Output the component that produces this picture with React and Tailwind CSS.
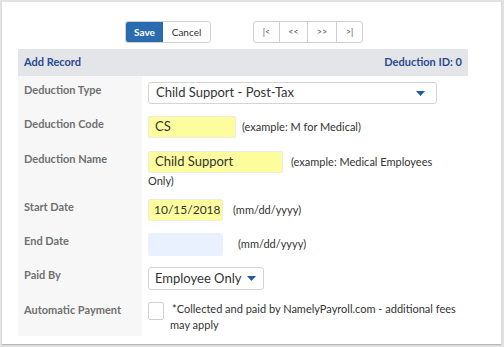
import React from "react";

function Caret() {
  return (
    <svg width="9" height="5" viewBox="0 0 9 5" className="block">
      <path d="M0 0 L9 0 L4.5 5 Z" fill="#1f5ca6" />
    </svg>
  );
}

function Row({ label, h, children }) {
  return (
    <div className="flex" style={{ height: h }}>
      <div className="w-[124px] shrink-0 bg-[#f7f7f7] pl-[6px] pt-[7px] text-[11px] font-bold leading-[14px] text-[#707070]">
        {label}
      </div>
      <div className="flex-1 pl-[6px] pt-[6px]">{children}</div>
    </div>
  );
}

export default function App() {
  return (
    <div
      className="w-[504px] h-[347px] bg-[#e2e2e2] pt-[2px] pl-[2px] pr-[3px]"
      style={{ fontFamily: "Lato, 'Open Sans', Arial, sans-serif" }}
    >
      <div className="h-[342px] bg-white shadow-[0_1px_1px_#b8b8b8] pt-[19px]">
        {/* toolbar */}
        <div className="flex h-[22px] items-stretch">
          <div className="ml-[123px] flex rounded-[3px] border border-[#cfcfcf] overflow-hidden">
            <div className="w-[37px] bg-[#2b6cb0] text-white text-[10px] font-bold flex items-center justify-center">
              Save
            </div>
            <div className="w-[47px] bg-white text-[#333] text-[10px] flex items-center justify-center">
              Cancel
            </div>
          </div>
          <div className="ml-[42px] flex rounded-[3px] border border-[#cfcfcf] overflow-hidden text-[9px] text-[#555]">
            <div className="w-[26px] flex items-center justify-center border-r border-[#cfcfcf]">|&lt;</div>
            <div className="w-[28px] flex items-center justify-center border-r border-[#cfcfcf]">&lt;&lt;</div>
            <div className="w-[29px] flex items-center justify-center border-r border-[#cfcfcf]">&gt;&gt;</div>
            <div className="w-[25px] flex items-center justify-center">&gt;|</div>
          </div>
        </div>

        <div className="ml-[16px] mt-[6px] w-[450px]">
          {/* header */}
          <div className="h-[27px] bg-[#e4e5e9] flex items-center justify-between px-[6px] text-[11px] font-bold text-[#2b4a8f]">
            <span>Add Record</span>
            <span>Deduction ID: 0</span>
          </div>

          <Row label="Deduction Type" h={34}>
            <div className="w-[289px] h-[22px] border border-[#d4d4d4] rounded-[3px] flex items-center justify-between pl-[7px] pr-[11px] text-[13px] text-[#333]">
              <span>Child Support - Post-Tax</span>
              <Caret />
            </div>
          </Row>

          <Row label="Deduction Code" h={35}>
            <div className="flex items-center">
              <div className="w-[88px] h-[22px] bg-[#fdfd9e] border border-[#ecece0] rounded-[2px] flex items-center pl-[6px] text-[13px] text-[#333]">
                CS
              </div>
              <span className="ml-[6px] text-[11px] text-[#333]">(example: M for Medical)</span>
            </div>
          </Row>

          <Row label="Deduction Name" h={48}>
            <div className="flex items-center">
              <div className="w-[135px] h-[22px] bg-[#fdfd9e] border border-[#ecece0] rounded-[2px] flex items-center pl-[6px] text-[13px] text-[#333]">
                Child Support
              </div>
              <span className="ml-[8px] text-[11px] text-[#333]">(example: Medical Employees</span>
            </div>
            <div className="text-[11px] leading-[14px] mt-[1px] text-[#333]">Only)</div>
          </Row>

          <Row label="Start Date" h={34}>
            <div className="flex items-center">
              <div className="w-[75px] h-[22px] bg-[#fdfd9e] border border-[#ecece0] rounded-[2px] flex items-center pl-[5px] text-[12px] text-[#333]">
                10/15/2018
              </div>
              <span className="ml-[10px] text-[11px] text-[#333]">(mm/dd/yyyy)</span>
            </div>
          </Row>

          <Row label="End Date" h={34}>
            <div className="flex items-center">
              <div className="w-[75px] h-[23px] bg-[#e8f1fd] rounded-[2px]"></div>
              <span className="ml-[15px] text-[11px] text-[#333]">(mm/dd/yyyy)</span>
            </div>
          </Row>

          <Row label="Paid By" h={35}>
            <div className="w-[116px] h-[23px] border border-[#d4d4d4] rounded-[3px] flex items-center pl-[6px] text-[13px] text-[#333]">
              <span>Employee Only</span>
              <span className="ml-[6px]"><Caret /></span>
            </div>
          </Row>

          <Row label="Automatic Payment" h={40}>
            <div className="flex items-start">
              <div className="w-[16px] h-[18px] border border-[#cfcfcf] rounded-[2px] bg-white shrink-0"></div>
              <div className="ml-[6px] w-[296px] text-[11px] leading-[16px] text-[#333] -mt-[1px]" style={{ textIndent: "2px" }}>
                *Collected and paid by NamelyPayroll.com - additional fees may apply
              </div>
            </div>
          </Row>
        </div>
      </div>
    </div>
  );
}
